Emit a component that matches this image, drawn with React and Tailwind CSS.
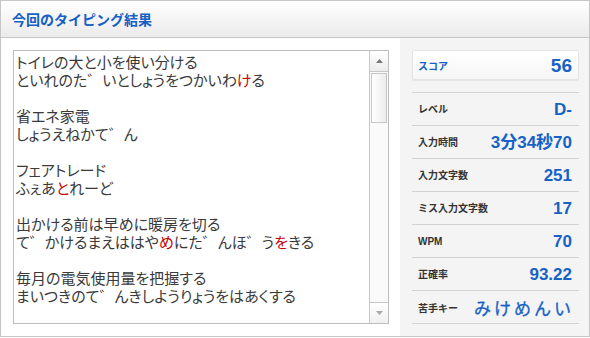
import React from "react";

const R = ({ children }) => <span className="text-[#c40000]">{children}</span>;

const rows = [
  { label: "レベル", value: "D-" },
  { label: "入力時間", value: "3分34秒70" },
  { label: "入力文字数", value: "251" },
  { label: "ミス入力文字数", value: "17" },
  { label: "WPM", value: "70" },
  { label: "正確率", value: "93.22" },
];

export default function App() {
  return (
    <div className="w-[590px] h-[337px] border border-[#c6c6c6] flex flex-col bg-white font-['Liberation_Sans','Noto_Sans_CJK_JP',sans-serif]">
      <div className="h-[37px] shrink-0 border-b border-[#c6c6c6] bg-gradient-to-b from-white to-[#ebebeb] flex items-center pl-[11px]">
        <span className="text-[14px] font-bold text-[#1560c4] font-['Noto_Sans_CJK_JP',sans-serif] leading-none">
          今回のタイピング結果
        </span>
      </div>
      <div className="flex flex-1">
        <div className="w-[399px] shrink-0 pl-[12px] pt-[12px]">
          <div className="w-[376px] h-[274px] border border-[#bdbdbd] flex bg-white">
            <div className="flex-1 overflow-hidden pl-[2px] pt-[2px] text-[15px] leading-[18px] text-[#3a3a3a] font-['Noto_Sans_CJK_JP',sans-serif] [font-feature-settings:'palt'] whitespace-pre">
              <div>トイレの大と小を使い分ける</div>
              <div>といれのた゛いとしょうをつかいわ<R>け</R>る</div>
              <div>&nbsp;</div>
              <div>省エネ家電</div>
              <div>しょうえねかて゛ん</div>
              <div>&nbsp;</div>
              <div>フェアトレード</div>
              <div>ふぇあ<R>と</R>れーど</div>
              <div>&nbsp;</div>
              <div>出かける前は早めに暖房を切る</div>
              <div>て゛かけるまえははや<R>め</R>にた゛んほ゛う<R>を</R>きる</div>
              <div>&nbsp;</div>
              <div>毎月の電気使用量を把握する</div>
              <div>まいつきのて゛んきしようりょうをはあくする</div>
            </div>
            <div className="w-[19px] shrink-0 border-l border-[#c6c6c6] flex flex-col bg-[#fafafa]">
              <div className="h-[21px] border-b border-[#c6c6c6] bg-gradient-to-b from-white to-[#ececec] flex items-center justify-center">
                <svg width="7" height="4" viewBox="0 0 7 4"><polygon points="0,4 7,4 3.5,0" fill="#777" /></svg>
              </div>
              <div className="mt-[1px] mx-[1px] h-[50px] border border-[#c6c6c6] bg-gradient-to-r from-white to-[#ececec]" />
              <div className="flex-1" />
              <div className="h-[21px] border-t border-[#c6c6c6] bg-gradient-to-b from-white to-[#f0f0f0] flex items-center justify-center">
                <svg width="7" height="4" viewBox="0 0 7 4"><polygon points="0,0 7,0 3.5,4" fill="#a8a8a8" /></svg>
              </div>
            </div>
          </div>
        </div>
        <div className="flex-1 bg-[#f4f4f4] pl-[12px] pr-[10px] pt-[12px]">
          <div className="h-[30px] rounded-[2px] border border-[#e4e4e4] bg-gradient-to-b from-white to-[#f6f6f6] shadow-[0_1px_1px_rgba(0,0,0,0.06)] flex items-center justify-between pl-[5px] pr-[6px]">
            <span className="text-[10px] font-bold text-[#1560c4] font-['Noto_Sans_CJK_JP',sans-serif]">スコア</span>
            <span className="text-[19px] font-bold text-[#1662c6] leading-none">56</span>
          </div>
          <div className="mt-[12px] border-t border-[#d2d2d2]">
            {rows.map((r) => (
              <div key={r.label} className="h-[33px] border-b border-[#d2d2d2] flex items-center justify-between pl-[6px] pr-[7px]">
                <span className="text-[10px] font-bold text-[#333] font-['Liberation_Sans','Noto_Sans_CJK_JP',sans-serif]">{r.label}</span>
                <span className="text-[17px] font-bold text-[#1662c6] leading-none font-['Liberation_Sans','Noto_Sans_CJK_JP',sans-serif]">{r.value}</span>
              </div>
            ))}
            <div className="h-[33px] border-b border-[#d2d2d2] flex items-center justify-between pl-[6px] pr-[5px]">
              <span className="text-[10px] font-bold text-[#333] font-['Noto_Sans_CJK_JP',sans-serif]">苦手キー</span>
              <span className="text-[17px] tracking-[3px] text-[#1662c6] leading-none font-['Noto_Sans_CJK_JP',sans-serif] [-webkit-text-stroke:0.3px_#1662c6]">みけめんい</span>
            </div>
          </div>
        </div>
      </div>
    </div>
  );
}
